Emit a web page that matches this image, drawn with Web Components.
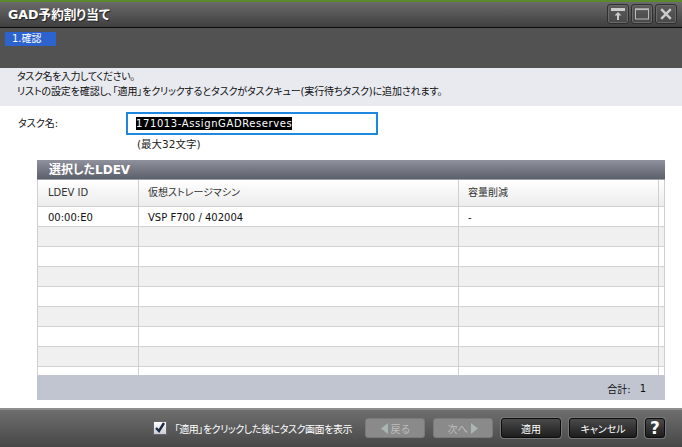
<!DOCTYPE html>
<html lang="ja">
<head>
<meta charset="utf-8">
<title>GAD予約割り当て</title>
<style>
  html, body { margin: 0; height: 100%; }
  body { font: 10px "DejaVu Sans", "Noto Sans CJK JP", sans-serif; color: #111; overflow: hidden; }
</style>
</head>
<body>
<gad-dialog>
  <dialog-header slot="header" title-text="GAD予約割り当て"></dialog-header>
  <step-bar slot="header" label="1.確認"></step-bar>
  <intro-note slot="header">
    <div style="letter-spacing:-.4px">タスク名を入力してください。</div>
    <div style="letter-spacing:-.14px">リストの設定を確認し、「適用」をクリックするとタスクがタスクキュー(実行待ちタスク)に追加されます。</div>
  </intro-note>
  <task-field value="171013-AssignGADReserves" hint="(最大32文字)">タスク名:</task-field>
  <ldev-table heading="選択したLDEV" total="1"></ldev-table>
  <dialog-footer slot="footer"></dialog-footer>
</gad-dialog>

<script>
const JP = `"DejaVu Sans", "Noto Sans CJK JP", sans-serif`;

class GadDialog extends HTMLElement {
  constructor() {
    super();
    this.attachShadow({ mode: "open" }).innerHTML = `
      <style>
        :host { display: flex; flex-direction: column; width: 682px; height: 447px; background: #fff; }
        main { flex: 1; display: flex; flex-direction: column; }
      </style>
      <slot name="header"></slot>
      <main><slot></slot></main>
      <slot name="footer"></slot>`;
  }
}

class DialogHeader extends HTMLElement {
  connectedCallback() {
    const btn = (svg) => `<button>${svg}</button>`;
    this.attachShadow({ mode: "open" }).innerHTML = `
      <style>
        :host { display: flex; align-items: center; justify-content: space-between; height: 28px; box-sizing: border-box;
          padding: 0 5px 2px 8px; border-top: 2px solid #5b8a2d; border-bottom: 1px solid #0c0c0c;
          background: linear-gradient(#6a6a6a, #3f3f3f); }
        h1 { margin: 0; font: bold 12.6px ${JP}; color: #fff; text-shadow: 1px 1px 1px #222; font-feature-settings: "palt"; }
        .btns { display: flex; gap: 2px; }
        button { width: 22px; height: 20px; padding: 0; display: flex; align-items: center; justify-content: center;
          background: linear-gradient(#5c5c5c, #484848); border: 1px solid #2f2f2f; border-radius: 3px; box-shadow: 0 0 0 1px #6a6a6a inset; }
        svg { display: block; }
      </style>
      <h1>${this.getAttribute("title-text")}</h1>
      <div class="btns">
        ${btn(`<svg width="14" height="14" viewBox="0 0 14 14"><path d="M0 1h14v3H0z" fill="#ccc"/><path d="M7 5l3.5 3.5H8V13H6V8.500H3.500z" fill="#ccc"/></svg>`)}
        ${btn(`<svg width="14" height="12" viewBox="0 0 14 12"><rect x=".5" y="1" width="13" height="10" fill="none" stroke="#bbb" stroke-width="1"/><path d="M0 .5h14v1.600H0z" fill="#bbb"/></svg>`)}
        ${btn(`<svg width="12" height="12" viewBox="0 0 12 12"><path d="M1.200 1.200l9.600 9.600M10.800 1.200l-9.600 9.600" stroke="#ccc" stroke-width="2.400"/></svg>`)}
      </div>`;
  }
}

class StepBar extends HTMLElement {
  connectedCallback() {
    this.attachShadow({ mode: "open" }).innerHTML = `
      <style>
        :host { display: block; height: 40px; box-sizing: border-box; padding: 4px 5px 0; background: #525252; }
        span { display: block; width: 51px; height: 14px; box-sizing: border-box; padding-left: 7px;
          background: #2c63cf; color: #fff; font: 10px/13px ${JP}; }
      </style>
      <span>${this.getAttribute("label")}</span>`;
  }
}

class IntroNote extends HTMLElement {
  constructor() {
    super();
    this.attachShadow({ mode: "open" }).innerHTML = `
      <style>
        :host { display: block; height: 38px; box-sizing: border-box; padding: 1px 0 0 17px; background: #e8eaf0;
          font: 10px/15px ${JP}; color: #111; font-feature-settings: "palt"; white-space: nowrap; }
      </style>
      <slot></slot>`;
  }
}

class TaskField extends HTMLElement {
  connectedCallback() {
    this.attachShadow({ mode: "open" }).innerHTML = `
      <style>
        :host { display: grid; grid-template-columns: 109px 1fr; padding: 6px 0 0 18px; height: 54px; box-sizing: border-box; }
        .label { font: 10px/24px ${JP}; font-feature-settings: "palt"; }
        .box { width: 252px; height: 23px; box-sizing: border-box; border: 2px solid #1e88e0; padding: 3px 0 0 8px; margin-left: -1px; background: #fff; }
        mark { display: inline-block; background: #000; color: #fff; font: 10px/13px ${JP}; letter-spacing: .6px; }
        .hint { font: 10.5px/14px ${JP}; padding: 2px 0 0 10px; color: #222; font-feature-settings: "palt"; }
      </style>
      <div class="label"><slot></slot></div>
      <div>
        <div class="box"><mark>${this.getAttribute("value")}</mark></div>
        <div class="hint">${this.getAttribute("hint")}</div>
      </div>`;
  }
}

class LdevTable extends HTMLElement {
  connectedCallback() {
    const rows = [["00:00:E0", "VSP F700 / 402004", "-"]];
    for (let i = 0; i < 8; i++) rows.push(["", "", ""]);
    const body = rows.map(r => `<div class="row">
        ${r.map(c => `<span class="cell">${c}</span>`).join("")}<span class="cell"></span></div>`).join("");
    this.attachShadow({ mode: "open" }).innerHTML = `
      <style>
        :host { display: block; width: 628px; margin-left: 37px; }
        h2 { margin: 0; height: 20px; box-sizing: border-box; padding-left: 12px; color: #fff; font: bold 12px/20px ${JP};
          background: linear-gradient(#8f919c, #5c606b); border-bottom: 1px solid #9a9ca6; font-feature-settings: "palt"; }
        .grid { height: 195px; overflow: hidden; box-sizing: border-box; border-left: 1px solid #cfcfcf; border-right: 1px solid #cfcfcf; }
        .row, .head { display: grid; grid-template-columns: 101px 320px 200px 1fr; }
        .head { height: 27px; background: linear-gradient(#fff, #ececec); border-bottom: 1px solid #cfcfcf; box-sizing: border-box; }
        .row { height: 20px; box-sizing: border-box; border-bottom: 1px solid #d2d2d2; background: #fff; }
        .row:nth-child(odd) { background: #f0f0f0; }
        .row:nth-child(2) { background: #fff; }
        .cell { border-right: 1px solid #cfcfcf; padding-left: 9px; line-height: 21px; color: #111; font-family: ${JP}; overflow: hidden; }
        .cell:first-child { padding-left: 10px; }
        .head .cell { line-height: 25px; color: #333; font-feature-settings: "palt"; }
        .cell:last-child { border-right: 0; padding: 0; }
        .total { height: 25px; background: #c1c5d0; display: flex; align-items: center; justify-content: flex-end; padding: 1px 19px 0 0; box-sizing: border-box; gap: 9px; font: 10px ${JP}; }
      </style>
      <h2>${this.getAttribute("heading")}</h2>
      <div class="grid">
        <div class="head"><span class="cell">LDEV ID</span><span class="cell">仮想ストレージマシン</span><span class="cell">容量削減</span><span class="cell"></span></div>
        ${body}
      </div>
      <div class="total"><span>合計:</span><span>${this.getAttribute("total")}</span></div>`;
  }
}

class DialogFooter extends HTMLElement {
  connectedCallback() {
    this.attachShadow({ mode: "open" }).innerHTML = `
      <style>
        :host { display: flex; align-items: center; justify-content: flex-end; gap: 8px; height: 39px; box-sizing: border-box; padding: 0 17px 1px 0;
          border-top: 2px solid #8e8e8e; background: linear-gradient(#6e6e6e, #474747); color: #fff; font: 10px ${JP}; }
        .check { width: 14px; height: 14px; box-sizing: border-box; background: linear-gradient(#fff, #c9ccd4); border: 1px solid #666;
          display: flex; align-items: center; justify-content: center; }
        .cap { font-feature-settings: "palt"; letter-spacing: -.45px; margin-right: 5px; white-space: nowrap; }
        button { height: 20px; box-sizing: border-box; padding: 0; font: 10px ${JP}; display: flex; align-items: center; justify-content: center; gap: 3px; }
        .off { width: 60px; background: #8a8a8a; color: #bdbdbd; border: 1px solid #7a7a7a; border-radius: 3px; }
        .on { background: linear-gradient(#4a4a4a, #1d1d1d); color: #fff; border: 1px solid #0d0d0d; border-radius: 3px; box-shadow: 0 0 0 1px #777; }
        .w60 { width: 60px; }
        .w68 { width: 68px; font-feature-settings: "palt"; letter-spacing: -.1px; }
        .help { width: 20px; font: bold 17px "DejaVu Sans", sans-serif; }
      </style>
      <span class="check"><svg width="12" height="12" viewBox="0 0 12 12"><path d="M2 6l3 3 5-8" fill="none" stroke="#1d2a44" stroke-width="2.400"/></svg></span>
      <span class="cap">「適用」をクリックした後にタスク画面を表示</span>
      <button class="off"><svg width="8" height="11" viewBox="0 0 8 11"><path d="M8 0v11L1 5.500z" fill="#a9b6b2"/></svg>戻る</button>
      <button class="off">次へ<svg width="8" height="11" viewBox="0 0 8 11"><path d="M0 0v11l7-5.500z" fill="#a9b6b2"/></svg></button>
      <button class="on w60">適用</button>
      <button class="on w68">キャンセル</button>
      <button class="on help">?</button>`;
  }
}

customElements.define("gad-dialog", GadDialog);
customElements.define("dialog-header", DialogHeader);
customElements.define("step-bar", StepBar);
customElements.define("intro-note", IntroNote);
customElements.define("task-field", TaskField);
customElements.define("ldev-table", LdevTable);
customElements.define("dialog-footer", DialogFooter);
</script>
</body>
</html>
